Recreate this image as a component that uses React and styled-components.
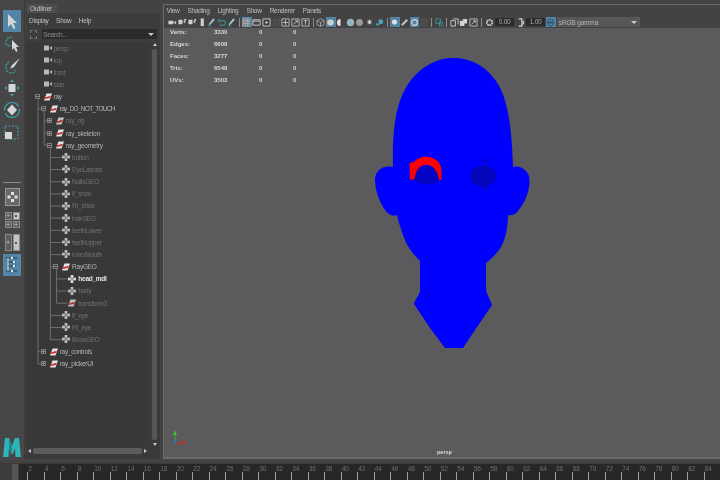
import React from "react";
import styled, { createGlobalStyle } from "styled-components";

const GlobalStyle = createGlobalStyle`
  html, body {
    margin: 0;
    padding: 0;
    background: #444344;
    overflow: hidden;
  }
  * {
    box-sizing: border-box;
  }
`;

const Screen = styled.div`
  width: 720px;
  height: 480px;
  display: flex;
  flex-direction: column;
  background: #444344;
  font-family: "Liberation Sans", Arial, sans-serif;
  color: #c8c8c8;
  overflow: hidden;
  filter: blur(0.35px);
`;

const Workspace = styled.div`
  flex: 1;
  min-height: 0;
  display: flex;
  padding-top: 4px;
`;

/* left tool column */
const Toolbox = styled.div`
  width: 25px;
  margin-top: -4px;
  padding: 10px 2px 2px;
  display: flex;
  flex-direction: column;
  align-items: center;
  background: #484748;
  border-right: 1px solid #3a393a;
`;

const ToolButton = styled.div`
  width: ${(p) => p.$w || 18}px;
  height: ${(p) => p.$h || 22}px;
  flex: none;
  margin-top: ${(p) => p.$top || 0}px;
  display: flex;
  align-items: center;
  justify-content: center;
  background: ${(p) => (p.$active ? "#5285a6" : "transparent")};
  svg {
    display: block;
  }
`;

const ToolDivider = styled.div`
  width: 18px;
  height: 1px;
  flex: none;
  margin-top: 38px;
  background: #8a8a8a;
`;

const PaneGrid = styled.div`
  width: 15px;
  flex: none;
  margin-top: 6px;
  display: grid;
  grid-template-columns: 7px 7px;
  gap: 1px;
`;

const PaneCell = styled.div`
  height: 7.5px;
  display: flex;
  align-items: center;
  justify-content: center;
  font-size: 7px;
  line-height: 7px;
  background: ${(p) => (p.$light ? "#c4c4c4" : "#5c5c5c")};
  border: 1px solid #8a8a8a;
  color: ${(p) => (p.$light ? "#333" : "#ccc")};
`;

const PaneTall = styled(PaneCell)`
  height: 17px;
`;

const Logo = styled.div`
  margin-top: auto;
  svg {
    display: block;
  }
`;

/* outliner */
const Outliner = styled.div`
  width: 135px;
  flex: none;
  display: flex;
  flex-direction: column;
`;

const TabRow = styled.div`
  height: 9px;
  padding-left: 2px;
`;

const Tab = styled.div`
  width: 30px;
  height: 9px;
  padding-left: 3px;
  font-size: 6.5px;
  letter-spacing: -0.1px;
  line-height: 10px;
  color: #c8c8c8;
  background: #4e4d4e;
`;

const OutlinerBody = styled.div`
  flex: 1;
  min-height: 0;
  margin-left: 1px;
  display: flex;
  flex-direction: column;
  position: relative;
  background: #393839;
`;

const MenuRow = styled.div`
  height: ${(p) => p.$h || 15}px;
  display: flex;
  align-items: center;
  gap: ${(p) => p.$gap || 7.5}px;
  padding-left: ${(p) => p.$pad || 3}px;
  font-size: 6.5px;
  letter-spacing: -0.25px;
  color: #c0c0c0;
  background: ${(p) => p.$bg || "#3e3d3e"};
`;

const SearchRow = styled.div`
  height: 14px;
  display: flex;
  align-items: center;
  padding: 0 3px 2px 4px;
  gap: 5px;
  background: #3e3d3e;
`;

const SearchIcon = styled.div`
  width: 7px;
  height: 9px;
  flex: none;
  border: 1px dashed #777;
`;

const SearchField = styled.div`
  flex: 1;
  height: 10px;
  display: flex;
  align-items: center;
  justify-content: space-between;
  padding: 0 3px 0 1px;
  font-size: 6.5px;
  letter-spacing: -0.2px;
  color: #8c8c8c;
  background: #2c2b2c;
`;

const SearchCaret = styled.span`
  width: 0;
  height: 0;
  border-left: 3px solid transparent;
  border-right: 3px solid transparent;
  border-top: 3px solid #c8c8c8;
`;

const TreeArea = styled.div`
  flex: 1;
  min-height: 0;
  display: flex;
`;

const Tree = styled.div`
  flex: 1;
  position: relative;
`;

const Connectors = styled.svg`
  position: absolute;
  left: 0;
  top: 0;
  pointer-events: none;
`;

const Row = styled.div`
  height: 12.15px;
  display: flex;
  align-items: center;
  position: relative;
  padding-left: ${(p) => 8.5 + p.$level * 6.2}px;
  font-size: 6.5px;
  letter-spacing: ${(p) => (p.$tight ? "-0.7px" : "-0.25px")};
  white-space: nowrap;
  color: ${(p) => (p.$tone === "dim" ? "#727272" : p.$tone === "bright" ? "#e6e6e6" : "#b4b4b4")};
  font-weight: ${(p) => (p.$tone === "bright" ? 700 : 400)};
`;

const Expander = styled.span`
  width: 5px;
  height: 5px;
  flex: none;
  margin-right: 4px;
  position: relative;
  border: 1px solid #7c7c7c;
  background: #393839;
  &::before {
    content: "";
    position: absolute;
    left: 0;
    right: 0;
    top: 1px;
    height: 1px;
    background: #8c8c8c;
  }
  &::after {
    content: "";
    position: absolute;
    left: 1px;
    top: 0;
    bottom: 0;
    width: 1px;
    background: ${(p) => (p.$open ? "transparent" : "#8c8c8c")};
  }
`;

const ExpanderGap = styled.span`
  width: 9px;
  flex: none;
`;

const RowIcon = styled.span`
  width: 8px;
  height: 8px;
  flex: none;
  margin-right: 2px;
  opacity: ${(p) => (p.$dim ? 0.8 : 1)};
  svg {
    display: block;
  }
`;

const VScroll = styled.div`
  width: 13px;
  flex: none;
  padding: 1px 2px 0 4px;
  display: flex;
  flex-direction: column;
  align-items: center;
  background: #3b3a3b;
`;

const ScrollArrow = styled.span`
  width: 0;
  height: 0;
  flex: none;
  border-left: 2.5px solid transparent;
  border-right: 2.5px solid transparent;
  ${(p) => (p.$down ? "border-top: 3px solid #c8c8c8;" : "border-bottom: 3px solid #c8c8c8;")}
`;

const VThumb = styled.div`
  width: 5px;
  flex: 1;
  margin: 3px 0;
  background: #575657;
  border-radius: 2px;
`;

const HScroll = styled.div`
  height: 13px;
  flex: none;
  padding: 2px 13px 5px 2px;
  display: flex;
  align-items: center;
  gap: 2px;
  background: #3b3a3b;
`;

const SideArrow = styled.span`
  width: 0;
  height: 0;
  flex: none;
  border-top: 2.5px solid transparent;
  border-bottom: 2.5px solid transparent;
  ${(p) => (p.$right ? "border-left: 3px solid #c8c8c8;" : "border-right: 3px solid #c8c8c8;")}
`;

const HThumb = styled.div`
  flex: 1;
  height: 6px;
  background: #5d5c5d;
  border-radius: 2px;
`;

/* viewport panel */
const ViewPanel = styled.div`
  flex: 1;
  min-width: 0;
  margin-left: 3px;
  display: flex;
  flex-direction: column;
  border-top: 1px solid #6a696a;
  border-left: 1px solid #6a696a;
`;

const IconBar = styled.div`
  height: 12px;
  display: flex;
  align-items: center;
  padding-left: 4px;
  background: #444344;
`;

const BarIcon = styled.span`
  width: ${(p) => p.$w || 9.72}px;
  height: 10px;
  flex: none;
  display: flex;
  align-items: center;
  justify-content: center;
  background: ${(p) => (p.$active ? "#5285a6" : "transparent")};
  svg {
    display: block;
  }
`;

const BarSep = styled.span`
  width: ${(p) => p.$w || 6}px;
  height: 9px;
  flex: none;
  display: flex;
  justify-content: center;
  &::before {
    content: "";
    width: 1px;
    background: #8d8d8d;
  }
`;

const NumberField = styled.span`
  width: 19px;
  height: 8px;
  flex: none;
  margin: 0 1px;
  font-size: 6.5px;
  letter-spacing: -0.2px;
  line-height: 8px;
  text-align: center;
  color: #a8a8a8;
  background: #2d2c2d;
`;

const GammaSelect = styled.span`
  width: 83px;
  height: 10px;
  flex: none;
  margin-left: 1px;
  padding: 0 3px 0 2px;
  display: flex;
  align-items: center;
  justify-content: space-between;
  font-size: 6.5px;
  letter-spacing: -0.15px;
  color: #b4b4b4;
  background: #585758;
`;

const Viewport = styled.div`
  flex: 1;
  min-height: 0;
  position: relative;
  background: #5b5a5c;
  border-bottom: 2px solid #6b6a6b;
  svg {
    position: absolute;
    left: 0;
    top: 0;
  }
`;

const StatsHud = styled.div`
  position: absolute;
  left: 6px;
  top: -2px;
  display: grid;
  grid-template-columns: 44px 45px 34px 10px;
  grid-auto-rows: 12.1px;
  align-items: center;
  font-size: 6px;
  font-weight: 700;
  color: #d8d8d8;
`;

const CameraName = styled.div`
  position: absolute;
  left: 273px;
  bottom: 2px;
  font-size: 5.5px;
  font-weight: 700;
  color: #dcdcdc;
`;

/* time slider */
const TimeSlider = styled.div`
  height: 17px;
  flex: none;
  margin-top: 4px;
  display: flex;
  background: #282728;
  border-top: 1px solid #3a393a;
`;

const RangeHandle = styled.div`
  width: 19px;
  flex: none;
  padding-left: 12px;
  background: #3d3c3d;
`;

const HandleKnob = styled.div`
  width: 6px;
  height: 16px;
  background: #555455;
`;

const Ruler = styled.div`
  flex: 1;
  display: flex;
  padding-left: 8.2px;
  overflow: hidden;
`;

const RulerCell = styled.div`
  width: 16.5px;
  flex: none;
  display: flex;
  flex-direction: column;
  justify-content: space-between;
`;

const RulerLabel = styled.span`
  font-size: 6.5px;
  line-height: 7px;
  letter-spacing: -0.1px;
  margin-top: 1px;
  margin-left: 1px;
  color: #6f6f6f;
`;

const RulerTick = styled.span`
  width: 1px;
  height: 8px;
  background: #a0a0a0;
`;

const Cam = () => (
  <svg width="8" height="8" viewBox="0 0 8 8">
    <rect x="0" y="1.5" width="5" height="5" fill="#d8d8d8" />
    <path d="M5.5 4 L8 2 V6 Z" fill="#d8d8d8" />
  </svg>
);

const Xform = () => (
  <svg width="8" height="8" viewBox="0 0 8 8">
    <path d="M2.5 0.5 H8 L5.5 7.5 H0 Z" fill="#e4e4e4" />
    <path d="M0.3 4.6 L6.8 2.8 L6 5 L0.3 6 Z" fill="#cf2e2e" />
  </svg>
);

const Mesh = () => (
  <svg width="8" height="8" viewBox="0 0 8 8" fill="#d8d8d8">
    <rect x="2.6" y="0" width="2.8" height="2.4" />
    <rect x="2.6" y="5.6" width="2.8" height="2.4" />
    <rect x="0" y="2.6" width="2.4" height="2.8" />
    <rect x="5.6" y="2.6" width="2.4" height="2.8" />
    <path d="M4 1.5 L6.500 4 L4 6.500 L1.500 4 Z" />
    <rect x="3.2" y="3.2" width="1.6" height="1.6" fill="#6a6a6a" />
  </svg>
);

const rowIcons = { cam: Cam, xform: Xform, mesh: Mesh };

const rows = [
  { name: "persp", level: 0, icon: "cam", tone: "dim" },
  { name: "top", level: 0, icon: "cam", tone: "dim" },
  { name: "front", level: 0, icon: "cam", tone: "dim" },
  { name: "side", level: 0, icon: "cam", tone: "dim" },
  { name: "ray", level: 0, icon: "xform", box: "open" },
  { name: "ray_DO_NOT_TOUCH", level: 1, icon: "xform", box: "open", tight: true },
  { name: "ray_rig", level: 2, icon: "xform", box: "closed", tone: "dim" },
  { name: "ray_skeleton", level: 2, icon: "xform", box: "closed" },
  { name: "ray_geometry", level: 2, icon: "xform", box: "open" },
  { name: "button", level: 3, icon: "mesh", tone: "dim" },
  { name: "EyeLashes", level: 3, icon: "mesh", tone: "dim" },
  { name: "NailsGEO", level: 3, icon: "mesh", tone: "dim" },
  { name: "lf_shoe", level: 3, icon: "mesh", tone: "dim" },
  { name: "Rt_shoe", level: 3, icon: "mesh", tone: "dim" },
  { name: "hairGEO", level: 3, icon: "mesh", tone: "dim" },
  { name: "teethLower", level: 3, icon: "mesh", tone: "dim" },
  { name: "teethUpper", level: 3, icon: "mesh", tone: "dim" },
  { name: "innerMouth", level: 3, icon: "mesh", tone: "dim" },
  { name: "RayGEO", level: 3, icon: "xform", box: "open" },
  { name: "head_mdl", level: 4, icon: "mesh", tone: "bright" },
  { name: "body", level: 4, icon: "mesh", tone: "dim" },
  { name: "transform3", level: 4, icon: "xform", tone: "dim" },
  { name: "lf_eye", level: 3, icon: "mesh", tone: "dim" },
  { name: "Rt_eye", level: 3, icon: "mesh", tone: "dim" },
  { name: "BrowGEO", level: 3, icon: "mesh", tone: "dim" },
  { name: "ray_controls", level: 1, icon: "xform", box: "closed" },
  { name: "ray_pickerUI", level: 1, icon: "xform", box: "closed" },
];

const rowY = (i) => (i + 0.5) * 12.15;
const guideX = (level) => 12 + level * 6.2;

// tree guide lines, in the tree's own coordinates
const TreeLines = () => (
  <Connectors width="121" height="340" stroke="#6e6e6e" strokeWidth="1" fill="none">
    <path d={`M${guideX(0)} ${rowY(4)} V${rowY(26)}`} />
    <path d={`M${guideX(1)} ${rowY(5)} V${rowY(8)}`} />
    <path d={`M${guideX(2)} ${rowY(8)} V${rowY(24)}`} />
    <path d={`M${guideX(3)} ${rowY(18)} V${rowY(21)}`} />
    {rows.map((r, i) =>
      r.level > 0 ? (
        <path key={r.name} d={`M${guideX(r.level - 1)} ${rowY(i)} H${guideX(r.level) + (r.box ? 0 : 5)}`} />
      ) : null
    )}
  </Connectors>
);

const toolIcons = {
  select: (
    <svg width="12" height="17" viewBox="0 0 12 17">
      <path d="M2 1 V14 L5 11 L7.5 16 L9.5 15 L7 10 H11 Z" fill="#d6d6d6" />
    </svg>
  ),
  lasso: (
    <svg width="16" height="18" viewBox="0 0 16 18" fill="none">
      <path d="M8 2 C3 2 1 6 2 9 C3 11 6 12 7 10" stroke="#3ba6b0" strokeWidth="1.2" strokeDasharray="2 1.2" />
      <path d="M8 5 V15 L10 13 L12 17 L13.5 16 L12 12 H15 Z" fill="#d6d6d6" />
    </svg>
  ),
  paint: (
    <svg width="17" height="18" viewBox="0 0 17 18" fill="none">
      <path d="M5 5 C1 7 1 12 4 15 C7 17 11 16 11 13" stroke="#3ba6b0" strokeWidth="1.2" strokeDasharray="2 1.2" />
      <path d="M16 1 L8 8 L6 12 L10 10 Z" fill="#d6d6d6" />
    </svg>
  ),
  move: (
    <svg width="16" height="18" viewBox="0 0 16 18">
      <rect x="4.5" y="5" width="7" height="8" fill="#d6d6d6" />
      <path d="M8 0.5 L10 3 H6 Z M8 17.5 L10 15 H6 Z M0.5 9 L3 7 V11 Z M15.5 9 L13 7 V11 Z" fill="#3ba6b0" />
    </svg>
  ),
  rotate: (
    <svg width="18" height="18" viewBox="0 0 18 18" fill="none">
      <circle cx="9" cy="9" r="7.5" stroke="#3ba6b0" strokeWidth="1.2" strokeDasharray="20 3" />
      <path d="M9 3.5 L14 9 L9 14.5 L4 9 Z" fill="#d6d6d6" />
    </svg>
  ),
  scale: (
    <svg width="16" height="16" viewBox="0 0 16 16" fill="none">
      <rect x="1" y="1" width="13" height="13" stroke="#3ba6b0" strokeWidth="1" strokeDasharray="2 1.5" />
      <rect x="1" y="7" width="7" height="7" fill="#d6d6d6" />
    </svg>
  ),
  single: (
    <svg width="15" height="18" viewBox="0 0 15 18">
      <rect x="0.5" y="0.5" width="14" height="17" fill="#6a696a" stroke="#9a9a9a" />
      <g fill="#e2e2e2">
        <rect x="6" y="4" width="3" height="3" />
        <rect x="6" y="11" width="3" height="3" />
        <rect x="2.5" y="7.5" width="3" height="3" />
        <rect x="9.5" y="7.5" width="3" height="3" />
      </g>
    </svg>
  ),
  outliner: (
    <svg width="16" height="18" viewBox="0 0 16 18" fill="none">
      <path d="M2 2 H13 M4 6 H12 M4 10 H12 M2 15 H13" stroke="#1d3a4d" strokeWidth="1.2" />
      <path d="M4 2 V15" stroke="#d6d6d6" strokeWidth="1" />
      <g fill="#e8e8e8">
        <rect x="7" y="1" width="2" height="2" />
        <rect x="9" y="5" width="2" height="2" />
        <rect x="9" y="9" width="2" height="2" />
        <rect x="7" y="14" width="2" height="2" />
      </g>
    </svg>
  ),
};

const barGlyphs = {
  cam: <path d="M0.5 3 H6 V7 H0.5 Z M6.5 5 L9 3 V7 Z" fill="#cfcfcf" />,
  camLock: <path d="M0.5 2 H5 V7 H0.5 Z M5.5 4 L8 3 V6 Z M7 1 H9 V3 H7 Z" fill="#cfcfcf" />,
  film: <path d="M3 0.5 H6.5 V9 H3 Z" fill="#cfcfcf" />,
  pen: <path d="M7 0.5 L8.5 2 L4 7 L2 8.5 L2.5 6 Z M1 9 H5" fill="#cfcfcf" stroke="#3ba6b0" strokeWidth="0.5" />,
  loop: <path d="M2 3 H7 A2.5 2.5 0 0 1 7 8 H3 M3 1 L1 3 L3 5" fill="none" stroke="#3ba6b0" strokeWidth="1" />,
  grid: <path d="M1 1 H8 V9 H1 Z M1 3.5 H8 M1 6 H8 M3.5 1 V9 M6 1 V9" fill="#777" stroke="#cfcfcf" strokeWidth="0.5" />,
  frame: <path d="M1 2 H9 V8 H1 Z M1 3.500 H9" fill="none" stroke="#cfcfcf" strokeWidth="1" />,
  dot: <path d="M1 1 H9 V9 H1 Z M5 3.5 V6.5 M3.5 5 H6.5" fill="none" stroke="#cfcfcf" strokeWidth="1" />,
  dim: <path d="M1.5 1.5 H8.5 V8.5 H1.5 Z" fill="#4b4a4b" stroke="#555" />,
  cross: <path d="M1 1 H9 V9 H1 Z M5 2 V8 M2 5 H8" fill="none" stroke="#cfcfcf" strokeWidth="0.9" />,
  arrowBox: <path d="M1 1 H9 V9 H1 Z M3 7 L7 3 M4.5 3 H7 V5.5" fill="none" stroke="#cfcfcf" strokeWidth="0.9" />,
  t: <path d="M1 1 H9 V9 H1 Z M3 3 H7 M5 3 V7.5" fill="none" stroke="#cfcfcf" strokeWidth="0.9" />,
  cube: <path d="M5 0.7 L9 2.7 V7.3 L5 9.3 L1 7.3 V2.7 Z M1 2.7 L5 5 L9 2.7 M5 5 V9.3" fill="none" stroke="#cfcfcf" strokeWidth="0.7" />,
  solid: <path d="M5 0.7 L9 2.7 V7.3 L5 9.3 L1 7.3 V2.7 Z" fill="#cfcfcf" stroke="#1f4a63" strokeWidth="0.5" />,
  half: <path d="M5 1 A4 4 0 0 0 5 9 Z" fill="#e4e4e4" />,
  ball: <circle cx="5" cy="5" r="3.8" fill="#8fb6c4" stroke="#cfcfcf" strokeWidth="0.5" />,
  sphere: <circle cx="5" cy="5" r="3.8" fill="#9b9b9b" />,
  light: <path d="M5 2 V7 M2.5 4.5 H7.5 M3 2.5 L7 6.5 M7 2.5 L3 6.5" stroke="#e4e4e4" strokeWidth="1" />,
  bulb: <path d="M1 6 H5 V8 H1 Z M6.5 1.5 A2.5 2.5 0 1 1 6.4 7 A2.5 2.5 0 1 1 6.5 1.5" fill="#46a4c0" />,
  xray: <circle cx="5" cy="4.5" r="3.5" fill="#dcdcdc" stroke="#1f4a63" strokeWidth="0.6" />,
  joints: <path d="M2 8 L8 2" stroke="#bdbdbd" strokeWidth="2.5" />,
  ring: <circle cx="5" cy="5" r="3.2" fill="none" stroke="#d4d4d4" strokeWidth="1.3" />,
  cursor: <path d="M1 1 H6 V6 H1 Z M5 4 V9 L6.500 8 L8 9.500 L9 8.500 L7.500 7 L9 6 Z" fill="none" stroke="#3ba6b0" strokeWidth="0.8" />,
  panels: <path d="M1 3 H6 V9 H1 Z M3.5 1 H9 V7" fill="none" stroke="#d4d4d4" strokeWidth="1" />,
  panels2: <path d="M1 3 H6 V9 H1 Z M4 1 H9 V6 H6" fill="#d4d4d4" />,
  gear: <circle cx="5" cy="5" r="3" fill="none" stroke="#d8d8d8" strokeWidth="1.7" strokeDasharray="2 0.6" />,
  gamma: <path d="M3 1 H6.5 V9 H3 M6.5 3 A2 2 0 0 1 6.5 7" fill="none" stroke="#d8d8d8" strokeWidth="1.2" />,
  swap: <path d="M2 4 A3 3 0 0 1 8 4 M2 6 A3 3 0 0 0 8 6 M1 4.5 H9 M1 5.5 H9" fill="none" stroke="#1f3f52" strokeWidth="0.8" />,
};

const barOne = ["cam", "camLock", "camLock", "film", "pen", "loop", "pen"];
const barTwo = [
  { g: "grid", active: true },
  { g: "frame" },
  { g: "dot" },
  { g: "dim" },
  { g: "cross" },
  { g: "arrowBox" },
  { g: "t" },
];
const barThree = [
  { g: "cube" },
  { g: "solid", active: true },
  { g: "half" },
  { g: "ball" },
  { g: "sphere" },
  { g: "light" },
  { g: "bulb" },
];
const barFour = [{ g: "xray", active: true }, { g: "joints" }, { g: "ring", active: true }, { g: "dim" }];

const Glyph = ({ name, active }) => (
  <BarIcon $active={active}>
    <svg width="9" height="9" viewBox="0 0 10 10">
      {barGlyphs[name]}
    </svg>
  </BarIcon>
);

const stats = [
  ["Verts:", "3330", "0", "0"],
  ["Edges:", "6608", "0", "0"],
  ["Faces:", "3277", "0", "0"],
  ["Tris:", "6548", "0", "0"],
  ["UVs:", "3503", "0", "0"],
];

const headPath =
  "M393 167 C392 125 397 98 411 80 C423 65 438 58 453 58 C470 58 486 65 498 84 C508 100 512 130 513 167 " +
  "C518 165 526 168 529 176 C531 186 527 200 518 211 C515 215 511 216 508 215 C508 228 505 242 499 250 " +
  "C495 255 490 260 486 263 L486 290 C487 295 490 299 492 305 L475 330 L463 348 L445 348 L430 328 L414 304 " +
  "C415 299 420 295 420 290 L420 261 C411 252 405 243 402 232 C400 226 398 220 397 215 " +
  "C392 217 388 214 385 210 C379 201 375 190 375 179 C376 170 383 165 393 167 Z";

const ticks = Array.from({ length: 42 }, (_, i) => (i + 1) * 2);

const App = () => (
  <Screen>
    <GlobalStyle />
    <Workspace>
      <Toolbox>
        <ToolButton $active>{toolIcons.select}</ToolButton>
        <ToolButton $top={1}>{toolIcons.lasso}</ToolButton>
        <ToolButton>{toolIcons.paint}</ToolButton>
        <ToolButton>{toolIcons.move}</ToolButton>
        <ToolButton>{toolIcons.rotate}</ToolButton>
        <ToolButton $top={1}>{toolIcons.scale}</ToolButton>
        <ToolDivider />
        <ToolButton $top={5} $h={18}>{toolIcons.single}</ToolButton>
        <PaneGrid>
          <PaneCell>+</PaneCell>
          <PaneCell $light>•</PaneCell>
          <PaneCell>+</PaneCell>
          <PaneCell>+</PaneCell>
        </PaneGrid>
        <PaneGrid>
          <PaneTall>+</PaneTall>
          <PaneTall $light>•</PaneTall>
        </PaneGrid>
        <ToolButton $active $top={3}>{toolIcons.outliner}</ToolButton>
        <Logo>
          <svg width="18" height="19" viewBox="0 0 18 19">
            <path d="M0 19 L2 0 H6 L9 8 L12 0 H16 L18 19 H12.5 L12 10 L9.800 16 H8.200 L6 10 L5.500 19 Z" fill="#2fb5b8" />
            <path d="M6 0 L9 8 V16 H8.200 L6 10 Z" fill="#178a94" />
          </svg>
        </Logo>
      </Toolbox>

      <Outliner>
        <TabRow>
          <Tab>Outliner</Tab>
        </TabRow>
        <OutlinerBody>
          <MenuRow>
            <span>Display</span>
            <span>Show</span>
            <span>Help</span>
          </MenuRow>
          <SearchRow>
            <SearchIcon />
            <SearchField>
              Search...
              <SearchCaret />
            </SearchField>
          </SearchRow>
          <TreeArea>
            <Tree>
              <TreeLines />
              {rows.map((r) => {
                const Icon = rowIcons[r.icon];
                return (
                  <Row key={r.name} $level={r.level} $tone={r.tone} $tight={r.tight}>
                    {r.box ? <Expander $open={r.box === "open"} /> : <ExpanderGap />}
                    <RowIcon $dim={r.tone === "dim"}>
                      <Icon />
                    </RowIcon>
                    {r.name}
                  </Row>
                );
              })}
            </Tree>
            <VScroll>
              <ScrollArrow />
              <VThumb />
              <ScrollArrow $down />
            </VScroll>
          </TreeArea>
          <HScroll>
            <SideArrow />
            <HThumb />
            <SideArrow $right />
          </HScroll>
        </OutlinerBody>
      </Outliner>

      <ViewPanel>
        <MenuRow $h={11} $gap={8} $pad={2.5} $bg="#444344">
          <span>View</span>
          <span>Shading</span>
          <span>Lighting</span>
          <span>Show</span>
          <span>Renderer</span>
          <span>Panels</span>
        </MenuRow>
        <IconBar>
          {barOne.map((g, i) => (
            <Glyph key={i} name={g} />
          ))}
          <BarSep />
          {barTwo.map((b, i) => (
            <Glyph key={i} name={b.g} active={b.active} />
          ))}
          <BarSep />
          {barThree.map((b, i) => (
            <Glyph key={i} name={b.g} active={b.active} />
          ))}
          <BarSep />
          {barFour.map((b, i) => (
            <Glyph key={i} name={b.g} active={b.active} />
          ))}
          <BarSep />
          <Glyph name="cursor" />
          <BarSep $w={4.5} />
          <Glyph name="panels" />
          <Glyph name="panels2" />
          <Glyph name="arrowBox" />
          <BarSep />
          <Glyph name="gear" />
          <NumberField>0.00</NumberField>
          <BarIcon $w={10}>
            <svg width="9" height="9" viewBox="0 0 10 10">
              {barGlyphs.gamma}
            </svg>
          </BarIcon>
          <NumberField>1.00</NumberField>
          <Glyph name="swap" active />
          <GammaSelect>
            sRGB gamma
            <SearchCaret />
          </GammaSelect>
        </IconBar>
        <Viewport>
          <svg width="556" height="431" viewBox="164 28 556 431">
            <path d={headPath} fill="#0000ff" />
            <ellipse cx="427" cy="175" rx="15" ry="9.5" fill="#0404c4" />
            <path
              d="M410 180 L409.5 163 L414 162 C418 157 424 156 429 157 C436 158 441 163 441.5 170 L441.5 180 L439 180 C438 172 434 166 428 165 C422 164 416 168 414.5 179 Z"
              fill="#ff0000"
            />
            <ellipse cx="483" cy="176" rx="13" ry="10.5" fill="#0505bc" />
            <path d="M485 157 V164 M482 160.500 H488 M485 186 V191 M482 187.500 H488" stroke="#0404a8" strokeWidth="1" />
            <path d="M175 444 V431" stroke="#3aa53a" strokeWidth="1.2" />
            <path d="M175 431 L173 435 H177 Z" fill="#3cc83c" />
            <path d="M175 443.500 H184" stroke="#c03030" strokeWidth="1.2" />
            <path d="M186 442 L182 440 V444 Z" fill="#c03030" />
            <path d="M175 440 V444" stroke="#2f6fb0" strokeWidth="1.5" />
          </svg>
          <StatsHud>
            {stats.flat().map((v, i) => (
              <span key={i}>{v}</span>
            ))}
          </StatsHud>
          <CameraName>persp</CameraName>
        </Viewport>
      </ViewPanel>
    </Workspace>
    <TimeSlider>
      <RangeHandle>
        <HandleKnob />
      </RangeHandle>
      <Ruler>
        {ticks.map((n) => (
          <RulerCell key={n}>
            <RulerLabel>{n}</RulerLabel>
            <RulerTick />
          </RulerCell>
        ))}
      </Ruler>
    </TimeSlider>
  </Screen>
);

export default App;
